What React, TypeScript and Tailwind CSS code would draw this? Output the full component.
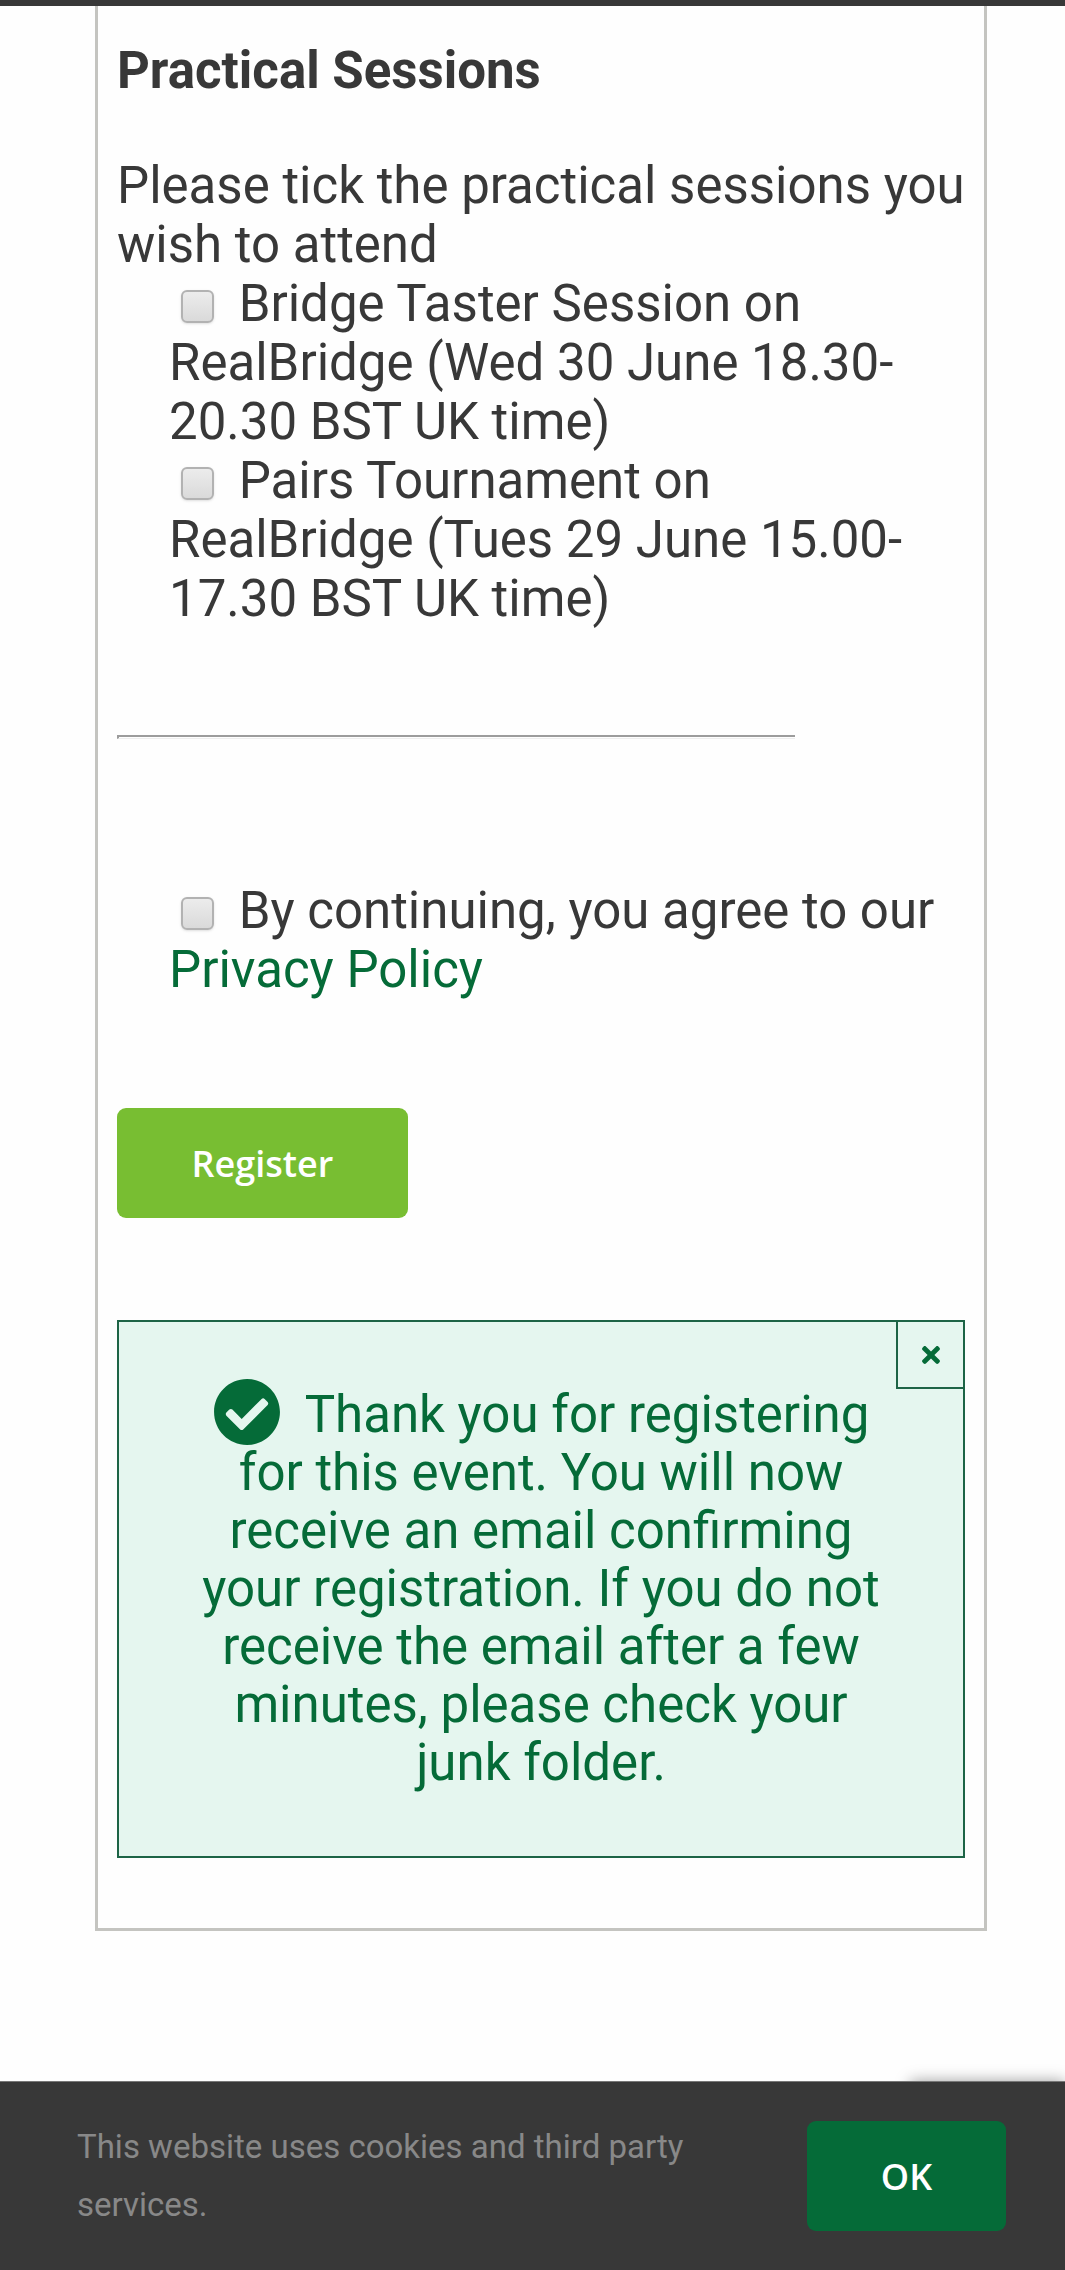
import { useState } from 'react';
import { FaCheckCircle, FaTimes } from 'react-icons/fa';

const sessions = [
  {
    id: 'taster',
    label: 'Bridge Taster Session on RealBridge (Wed 30 June 18.30-20.30 BST UK time)',
  },
  {
    id: 'pairs',
    label: 'Pairs Tournament on RealBridge (Tues 29 June 15.00-17.30 BST UK time)',
  },
];

function Checkbox({ id }: { id: string }) {
  return (
    <input
      type="checkbox"
      id={id}
      name={id}
      className="ml-3 mr-3 inline-block size-[33px] appearance-none rounded-md border-2 border-[#b2b2b2] bg-linear-to-b from-[#ececec] to-[#dadada] align-[-2px] shadow-sm checked:from-[#056b38] checked:to-[#056b38]"
    />
  );
}

function RegistrationMessage({ onClose }: { onClose: () => void }) {
  return (
    <div
      role="status"
      className="relative mt-[102px] border-2 border-[#1d6446] bg-[#e5f6ef] px-[70px] py-16 text-center leading-[58px] text-[#056b38]"
    >
      <button
        type="button"
        aria-label="Close"
        onClick={onClose}
        className="absolute top-0 right-0 flex size-[67px] items-center justify-center border-b-2 border-l-2 border-[#1d6446]"
      >
        <FaTimes size={26} />
      </button>
      <p>
        <FaCheckCircle size={68} className="-my-3 mr-6 inline-block align-[-2px]" />
        Thank you for registering for this event. You will now receive an email
        confirming your registration. If you do not receive the email after a
        few minutes, please check your junk folder.
      </p>
    </div>
  );
}

function CookieBar({ onAccept }: { onAccept: () => void }) {
  return (
    <footer className="sticky bottom-0 mt-auto">
      {/* Floating badge tucked behind the bar */}
      <div className="absolute top-0 right-0 h-24 w-[155px] bg-white shadow-[0_0_14px_#a0a0a0]" />
      <div className="relative flex items-center justify-between gap-16 border-t border-[#777] bg-[#383838] py-9 pr-[59px] pl-[77px]">
        <p className="max-w-[640px] text-[33px] leading-[58px] text-[#888]">
          This website uses cookies and third party services.
        </p>
        <button
          type="button"
          onClick={onAccept}
          className="h-[110px] w-[199px] shrink-0 rounded-[9px] bg-[#056b38] font-['Open_Sans',sans-serif] text-[36px] font-semibold text-white"
        >
          OK
        </button>
      </div>
    </footer>
  );
}

export default function App() {
  const [showMessage, setShowMessage] = useState(true);
  const [showCookies, setShowCookies] = useState(true);

  return (
    <div className="flex min-h-screen flex-col bg-[#fefefe] font-[Roboto,sans-serif] text-[51px] leading-[59px] text-[#383838]">
      <header className="h-1.5 bg-[#383838]" />

      <main className="mr-[78px] mb-[150px] ml-[95px] border-3 border-t-0 border-[#c4c4c0] px-[19px] pt-[35px] pb-[70px]">
        <form onSubmit={e => e.preventDefault()}>
          <h2 className="mb-14 font-bold">Practical Sessions</h2>

          <fieldset>
            <legend>Please tick the practical sessions you wish to attend</legend>
            <ul className="pl-[52px]">
              {sessions.map(session => (
                <li key={session.id}>
                  <Checkbox id={session.id} />{' '}
                  <label htmlFor={session.id}>{session.label}</label>
                </li>
              ))}
            </ul>
          </fieldset>

          <hr className="mt-[107px] h-1 w-4/5 border-t-2 border-b border-l-2 border-t-[#9c9c9c] border-b-[#eee] border-l-[#9c9c9c]" />

          <div className="mt-[142px] pl-[52px]">
            <Checkbox id="privacy" />{' '}
            <label htmlFor="privacy">
              By continuing, you agree to our{' '}
              <a href="#privacy-policy" className="text-[#056b38]">
                Privacy Policy
              </a>
            </label>
          </div>

          <button
            type="submit"
            className="mt-[109px] block h-[110px] w-[291px] rounded-[9px] bg-[#78be32] font-['Open_Sans',sans-serif] text-[36px] font-semibold text-white"
          >
            Register
          </button>
        </form>

        {showMessage && (
          <RegistrationMessage onClose={() => setShowMessage(false)} />
        )}
      </main>

      {showCookies && <CookieBar onAccept={() => setShowCookies(false)} />}
    </div>
  );
}
